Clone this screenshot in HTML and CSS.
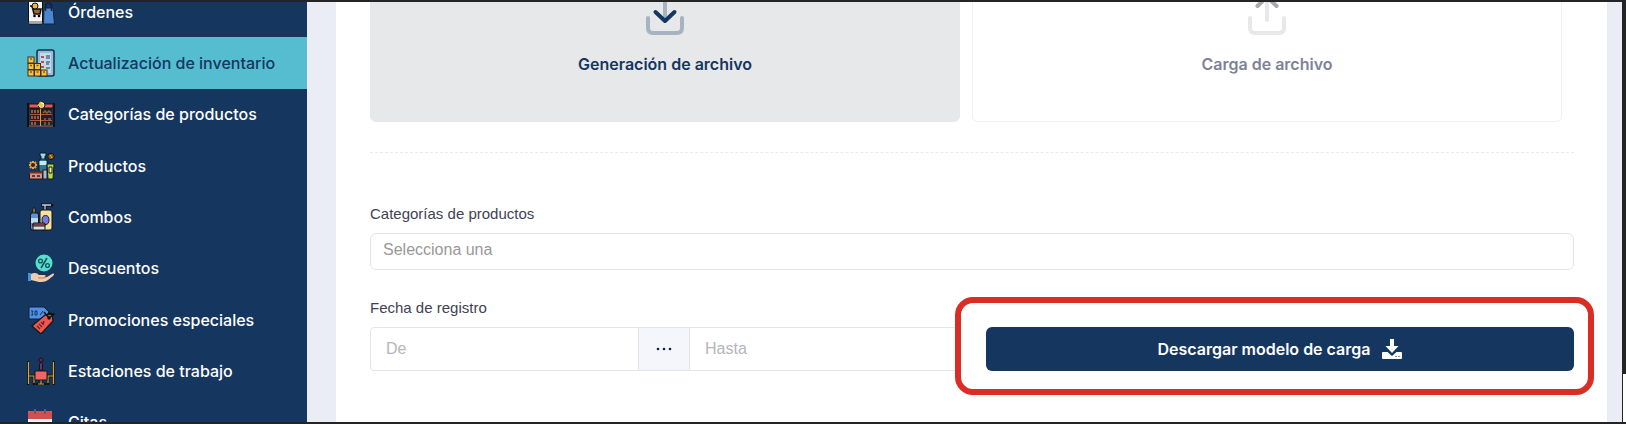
FILE: index.html
```html
<!DOCTYPE html>
<html lang="es">

<head>
	<title>Actualización de inventario</title>
	<meta charset="utf-8" />
	<meta name="viewport" content="width=device-width, initial-scale=1">
	<link rel="stylesheet" href="styles.css">
</head>

<body>
	<nav class="sidebar">
		<ul class="menu">
			<li><a href="#ordenes">
				<svg class="menu-icon" viewBox="0 0 28 28">
					<rect x="1.5" y="0" width="14" height="26" rx="1.5" fill="#f4f4f4" stroke="#111" />
					<path d="M2 23h13v2.5H2z" fill="#a9a9ac" />
					<path d="M3 8h2l2 8h6l1-5H6" fill="#a8622c" stroke="#111" stroke-width="1.5" />
					<circle cx="8" cy="8" r="3" fill="#f0b63c" stroke="#111" />
					<circle cx="7.5" cy="18" r="1.3" /><circle cx="12" cy="18" r="1.3" />
					<path d="M17 10h9l1.5 16h-11z" fill="#4a86d0" stroke="#15233c" />
					<path d="M18.5 13V8a3 3 0 0 1 6 0v5" fill="none" stroke="#15233c" stroke-width="1.5" />
				</svg>
				<span>Órdenes</span></a></li>
			<li class="active"><a href="#inventario">
				<svg class="menu-icon" viewBox="0 0 28 28">
					<rect x="10" y="1" width="17" height="26" rx="2" fill="#8fc0df" stroke="#1b2c40" stroke-width="1.5" />
					<rect x="13" y="4" width="11" height="20" fill="#bfdcec" />
					<path d="M14 8h3M14 13h3M14 18h3" stroke="#bf4b55" stroke-width="2" />
					<path d="M19 7h4M19 9h4M19 13h4M19 15h3M19 19h4" stroke="#26384e" />
					<g fill="#f8c33c" stroke="#403019">
						<rect x="1" y="8" width="6" height="6" /><rect x="1" y="14.5" width="6" height="6" />
						<rect x="7.5" y="14.5" width="6" height="6" /><rect x="1" y="21" width="6" height="6" />
						<rect x="7.5" y="21" width="6" height="6" /><rect x="14" y="21" width="6" height="6" />
					</g>
					<path d="M3 10h2M3 16.5h2M9.5 16.5h2M3 23h2M9.5 23h2M16 23h2" stroke="#8a5a1e" stroke-width="1.5" />
				</svg>
				<span>Actualización de inventario</span></a></li>
			<li><a href="#categorias">
				<svg class="menu-icon" viewBox="0 0 28 28">
					<path d="M1 3v24M27 3v24M14 7v19" stroke="#111" stroke-width="2" />
					<rect x="3" y="8" width="22" height="18" fill="#1c2030" />
					<rect x="2" y="4" width="24" height="4" fill="#e65a5e" stroke="#151515" />
					<path d="M3 14.5h22M3 20.5h22M2 26h24" stroke="#a65a42" />
					<path d="M5 13v-3M8 13v-3M11 13v-3M5 19v-3M8 19v-3M11 19v-3M5 25v-3M8 25v-3" stroke="#c86a39" stroke-width="1.5" />
					<path d="M16 13l2-2 2 2 2-2 2 2M17 19h2M21 19h3M18 25v-3M22 25v-3" fill="none" stroke="#926331" stroke-width="1.5" />
					<path d="M13.5 8v18" stroke="#d89c3a" />
					<circle cx="14.5" cy="5" r="3.5" fill="#ededdc" stroke="#111" />
					<path d="M14 2l-2 3h3l-1 3" fill="none" stroke="#ebc62e" stroke-width="2" />
				</svg>
				<span>Categorías de productos</span></a></li>
			<li><a href="#productos">
				<svg class="menu-icon" viewBox="0 0 28 28">
					<path d="M13 1h6v3h-1v4h-4V4h-1z" fill="#9bd9ec" stroke="#101820" />
					<rect x="12" y="7" width="8" height="13" rx="2" fill="#32758e" stroke="#101820" />
					<path d="M12.5 9h7v4h-7z" fill="#c4ebf4" />
					<circle cx="24" cy="4.5" r="3.2" fill="#8a5425" stroke="#161616" />
					<path d="M23 3l2 3" stroke="#ffc23a" />
					<path d="M6 9v8M2 13h8M3 10l6 6M9 10l-6 6" stroke="#f2a134" stroke-width="2" />
					<circle cx="6" cy="13" r="2" fill="#2b2222" />
					<path d="M20 12h7l-1 15h-5z" fill="#b8d94c" stroke="#151c13" />
					<path d="M22 15h3v6h-3z" fill="#f5f1a3" stroke="#151c13" />
					<rect x="2.5" y="20" width="13" height="7" fill="#d99282" stroke="#27171a" />
					<path d="M2 20.5h14" stroke="#6f352e" stroke-width="2" />
					<path d="M5 24h3M10 24h3" stroke="#5d3b3b" stroke-width="2" />
					<rect x="16" y="18" width="4" height="9" fill="#a8bad0" stroke="#181c27" />
				</svg>
				<span>Productos</span></a></li>
			<li><a href="#combos">
				<svg class="menu-icon" viewBox="0 0 28 28">
					<path d="M18 8V2M14 2h10l2 1" fill="none" stroke="#111" stroke-width="3" />
					<path d="M18 8V2M15 2h9" fill="none" stroke="#c3cfe2" stroke-width="1.3" />
					<rect x="13" y="7" width="12" height="20" rx="2" fill="#f7e29d" stroke="#151515" />
					<ellipse cx="18.5" cy="17" rx="3.5" ry="4.5" fill="#7b79dc" stroke="#211e38" />
					<path d="M6 10V5h2v5" fill="#e7bc78" stroke="#151515" />
					<rect x="3.5" y="10" width="8" height="17" rx="2" fill="#5c94d2" stroke="#151515" />
					<path d="M4 15h7v5H4z" fill="#b9daf1" />
					<rect x="6" y="20" width="12" height="7" rx="1" fill="#d7dce9" stroke="#151515" />
					<path d="M6 21h12v2H6z" fill="#e36663" stroke="#151515" />
				</svg>
				<span>Combos</span></a></li>
			<li><a href="#descuentos">
				<svg class="menu-icon" viewBox="0 0 28 28">
					<circle cx="17" cy="9" r="8.5" fill="#56dfc9" />
					<path d="M20 4l-6 10" stroke="#125261" stroke-width="1.5" />
					<circle cx="13.5" cy="7" r="1.9" fill="none" stroke="#125261" stroke-width="1.3" />
					<circle cx="20.5" cy="11.5" r="1.9" fill="none" stroke="#125261" stroke-width="1.3" />
					<path d="M4 20c4-2 6-1 8 1l6 0c1 2-1 3-3 3l5-1 5-3c2-1 3 0 1 2l-5 4c-3 2-6 2-9 2L4 26z" fill="#f1cbae" />
					<path d="M11 24h5c2 0 3-1 2-3" fill="none" stroke="#b77f65" />
					<path d="M1 19h3v8H1z" fill="#4292dc" />
				</svg>
				<span>Descuentos</span></a></li>
			<li><a href="#promociones">
				<svg class="menu-icon" viewBox="0 0 28 28">
					<path d="M2 1h15l5 5-5 7H2z" fill="#4f91e5" stroke="#152135" />
					<path d="M4 5h2l-1 2 1 2H4M8 5h2v4H8zM16 5l-3 4" fill="none" stroke="#173363" />
					<path d="M18 9l7-1 1 7-12 13-9-8z" fill="#ed5751" stroke="#171717" stroke-width="1.3" />
					<path d="M10 20l3 3M12 18l3 3M14 16l2 2M17 15l-1 4" stroke="#701f26" stroke-width="1.3" />
					<circle cx="22" cy="12" r="1.7" fill="#171717" />
					<path d="M17 6l5 6 5-4-6-1" fill="none" stroke="#111" stroke-width="1.5" />
				</svg>
				<span>Promociones especiales</span></a></li>
			<li><a href="#estaciones">
				<svg class="menu-icon" viewBox="0 0 28 28">
					<path d="M1 4v24M1 19h6v9M27 4v24M27 19h-6v9M14 20v7M9 27h10" fill="none" stroke="#111" stroke-width="2.6" />
					<path d="M1.500 5v22M2 19h5v7M26.500 5v22M26 19h-5v7M14 23v4M11 27h6" fill="none" stroke="#d5a53b" stroke-width="1.2" />
					<path d="M8 14h12v9H8z" fill="#f36464" stroke="#171717" />
					<path d="M12.500 13V7l1.500-2 1.500 2v6z" fill="#603a69" stroke="#16121c" />
					<circle cx="14" cy="3" r="2" fill="#78243d" stroke="#16121c" />
				</svg>
				<span>Estaciones de trabajo</span></a></li>
			<li><a href="#citas">
				<svg class="menu-icon" viewBox="0 0 28 28">
					<rect x="1" y="3" width="24" height="24" rx="2" fill="#f2f2f2" />
					<path d="M1 11V5a2 2 0 0 1 2-2h20a2 2 0 0 1 2 2v6z" fill="#d5504c" />
					<path d="M8 1v5M18 1v5" stroke="#59606b" stroke-width="2" />
					<path d="M5 15h3M11 15h3M17 15h3M5 20h3M11 20h3M17 20h3" stroke="#8b8e96" stroke-width="2" />
				</svg>
				<span>Citas</span></a></li>
		</ul>
	</nav>

	<main class="content">
		<div class="panel">
			<div class="steps">
				<button type="button" class="step selected">
					<svg class="step-icon" viewBox="0 0 40 40" fill="none" stroke-width="4" stroke-linecap="round" stroke-linejoin="round">
						<path d="M3 22v10q0 5 5 5h24q5 0 5-5V22M20 2v20" stroke="#a7b3c0" />
						<path d="M10.5 16L20 25l9.5-9" stroke="#14365f" />
					</svg>
					<span>Generación de archivo</span>
				</button>
				<button type="button" class="step">
					<svg class="step-icon" viewBox="0 0 40 40" fill="none" stroke-width="4" stroke-linecap="round" stroke-linejoin="round">
						<path d="M3 22v10q0 5 5 5h24q5 0 5-5V22M20 6v18" stroke="#e8e8ea" />
						<path d="M10.5 10L20 1l9.5 9" stroke="#a9a9ac" />
					</svg>
					<span>Carga de archivo</span>
				</button>
			</div>

			<hr class="separator">

			<form>
				<div class="field">
					<label for="categoria">Categorías de productos</label>
					<select id="categoria" name="categoria">
						<option>Selecciona una</option>
					</select>
				</div>
				<div class="row">
					<div class="field">
						<label for="desde">Fecha de registro</label>
						<div class="range">
							<input type="text" id="desde" name="desde" placeholder="De">
							<span class="range-dots">
								<svg viewBox="0 0 16 4" width="16" height="4" fill="#14203a">
									<circle cx="2" cy="2" r="1.3" /><circle cx="8" cy="2" r="1.3" /><circle cx="14" cy="2" r="1.3" />
								</svg>
							</span>
							<input type="text" id="hasta" name="hasta" placeholder="Hasta" aria-label="Fecha hasta">
						</div>
					</div>
					<div class="download">
						<button type="button">
							<span>Descargar modelo de carga</span>
							<svg viewBox="0 0 20 20" width="20" height="20" fill="#fff">
								<path d="M8 0h4v7h4.5L10 14 3.5 7H8z" />
								<path fill-rule="evenodd" d="M1 13h4.5l4.5 4 4.5-4H19a1 1 0 0 1 1 1v5a1 1 0 0 1-1 1H1a1 1 0 0 1-1-1v-5a1 1 0 0 1 1-1zM13.5 17v1h1v-1zM16.500 17v1h1v-1z" />
							</svg>
						</button>
					</div>
				</div>
			</form>
		</div>
	</main>
	<div class="edge"></div>
</body>

</html>
```

FILE: styles.css
```css
* {
	box-sizing: border-box;
}

body {
	display: flex;
	height: 100vh;
	margin: 0;
	overflow: hidden;
	border-top: 2px solid #242426;
	border-bottom: 2px solid #242426;
	background-color: #eaecf6;
	font-family: "Liberation Sans", Arial, sans-serif;
	font-size: 16px;
}

/* Side menu */
.sidebar {
	flex: 0 0 307px;
	overflow: hidden;
	background-color: #14365f;
}

.menu {
	display: grid;
	grid-auto-rows: 1fr;
	height: 462px;
	margin: -16px 0 0;
	padding: 0;
	list-style: none;
}

.menu a {
	display: flex;
	align-items: center;
	gap: 13px;
	height: 100%;
	padding-left: 27px;
	color: white;
	font-family: Inter, sans-serif;
	font-weight: 500;
	text-decoration: none;
}

.menu .active a {
	background-color: #56bdd1;
	color: #14365f;
}

.menu-icon {
	width: 28px;
	height: 28px;
}

/* Main panel */
.content {
	flex: 1;
	padding: 0 15px 0 29px;
	overflow: hidden;
}

.panel {
	height: 100%;
	padding: 0 33px 0 34px;
	background-color: white;
}

.panel:before {
	content: "";
	display: table;
}

.steps {
	display: grid;
	grid-template-columns: 1fr 1fr;
	gap: 12px;
	margin-top: -40px;
	padding-right: 12px;
}

.step {
	display: flex;
	flex-direction: column;
	align-items: center;
	gap: 15px;
	padding: 33px 20px 44px;
	border: 1px solid #f0f0f2;
	border-radius: 6px;
	background-color: white;
	color: #7e8299;
	font-family: Inter, sans-serif;
	font-size: 16px;
	font-weight: 600;
	line-height: 26px;
	cursor: pointer;
}

.step.selected {
	border-color: #e6e8ea;
	background-color: #e6e8ea;
	color: #14365f;
}

.step-icon {
	width: 40px;
	height: 40px;
}

.separator {
	margin: 30px 0 48px;
	border: 0;
	border-top: 1px dashed #e9eaee;
}

.field label {
	display: block;
	margin-bottom: 6px;
	color: #3f4254;
	font-size: 15px;
	line-height: 26px;
}

select {
	display: block;
	width: 100%;
	height: 37px;
	margin-bottom: 25px;
	padding: 0 12px 4px;
	border: 1px solid #e2e4e8;
	border-radius: 6px;
	background-color: white;
	color: #999;
	font-family: inherit;
	font-size: 16px;
	appearance: none;
}

.row {
	display: grid;
	grid-template-columns: 1fr 1fr;
	gap: 28px;
	align-items: end;
}

.range {
	display: flex;
	height: 44px;
	border: 1px solid #e2e5ea;
	border-radius: 4px;
}

.range input {
	flex: 1;
	min-width: 0;
	padding: 0 15px;
	border: 0;
	background-color: transparent;
	font-family: inherit;
	font-size: 16px;
}

.range input::placeholder {
	color: #b5b5bb;
}

.range-dots {
	display: flex;
	align-items: center;
	justify-content: center;
	width: 52px;
	border-left: 1px solid #e2e5ea;
	border-right: 1px solid #e2e5ea;
	background-color: #f4f6fb;
}

.download {
	position: relative;
}

.download button {
	display: flex;
	align-items: center;
	justify-content: center;
	gap: 12px;
	width: 100%;
	height: 44px;
	border: 0;
	border-radius: 6px;
	background-color: #14365f;
	color: white;
	font-family: Inter, sans-serif;
	font-size: 16px;
	font-weight: 600;
	cursor: pointer;
}

/* Red highlight around the button */
.download:after {
	content: "";
	position: absolute;
	inset: -30px -20px -24px -31px;
	border: 6px solid #d92d25;
	border-radius: 18px;
	pointer-events: none;
}

.edge {
	width: 4px;
	border-left: 1px solid #242426;
	background: linear-gradient(#242426 372px, #fff 372px);
}
```
